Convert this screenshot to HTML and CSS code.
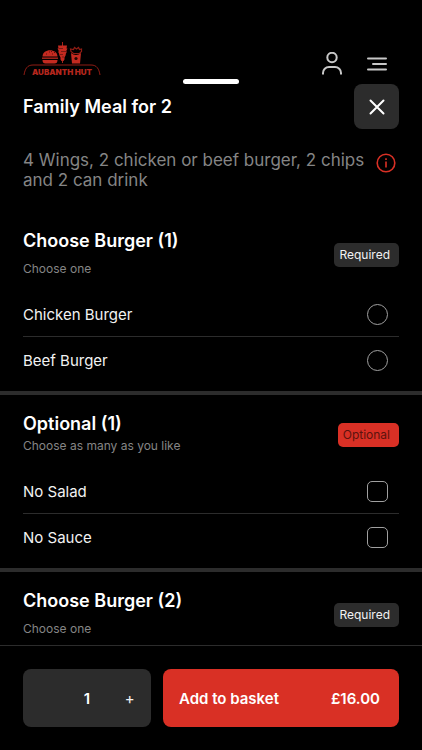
FILE: index.html
```html
<!DOCTYPE html>
<html lang="en">
<head>
  <meta charset="UTF-8" />
  <meta name="viewport" content="width=device-width, initial-scale=1" />
  <title>Family Meal for 2</title>
  <link rel="stylesheet" href="styles.css">
</head>
<body>
  <header class="topbar">
    <a href="#" class="logo" aria-label="Home">
      <svg viewBox="0 0 78 34" width="78" height="34" fill="none">
        <!-- burger -->
        <path d="M19.500 14.500c0-8.500 15-8.500 15 0z" fill="#c42a20"/>
        <path d="M23 12h1M26 10h1M29 12h1M31 10.500h1M28 9.500h1" stroke="#5c130e"/>
        <path d="M19 16.200h16" stroke="#a5231a" stroke-width="1.500"/>
        <path d="M19.500 18h15c0 2.500-1 3.500-3 3.500h-9c-2 0-3-1-3-3.500z" fill="#c42a20"/>
        <!-- kebab -->
        <path d="M39.500 0v21" stroke="#a5231a"/>
        <path d="M35 3.500h9l-.5 3h1l-1.500 3h1l-1.500 3h.5l-1.500 3v2l-1 1.500h-2l-1-1.500v-2l-1.500-3h.5l-1.500-3h1l-1.500-3h1z" fill="#c42a20"/>
        <path d="M36 6.500h4M38 9.500h5M37 12.500h3M39 15h2" stroke="#7a1a13"/>
        <!-- fries -->
        <path d="M48 9.500l-.5-2.500 3 .5 1-2 2 1.500 2-1.500 1 2 2-.5v2.500l-2 2h-6z" stroke="#8f1c14" stroke-width="1.200"/>
        <path d="M48 11c3 2.500 7 2.500 10 0l-1 10.500h-8z" fill="#c42a20"/>
        <circle cx="53" cy="16.500" r="1.600" fill="#240502"/>
        <path d="M1 33c1-6 3-10 9-10h58c6 0 8 4 9 10" stroke="#8f1c14"/>
      </svg>
      <span class="logo-name">AUBANTH HUT</span>
    </a>
    <nav class="topbar-nav">
      <button class="icon-btn" type="button" aria-label="Account">
        <svg viewBox="0 0 24 24" width="24" height="24" fill="none" stroke="currentColor" stroke-width="2">
          <circle cx="12" cy="5.500" r="4.700"/>
          <path d="M3 22.500v-1.500a6 6 0 0 1 6-6h6a6 6 0 0 1 6 6v1.500"/>
        </svg>
      </button>
      <button class="icon-btn" type="button" aria-label="Menu">
        <svg viewBox="0 0 24 24" width="24" height="24" fill="none" stroke="currentColor" stroke-width="2" stroke-linecap="round">
          <path d="M3 6.500h18M8 12h13M3 17.500h18"/>
        </svg>
      </button>
    </nav>
  </header>

  <main class="sheet">
    <div class="handle"></div>
    <div class="sheet-head">
      <h1>Family Meal for 2</h1>
      <button class="close" type="button" aria-label="Close">
        <svg viewBox="0 0 16 16" width="16" height="16" fill="none" stroke="currentColor" stroke-width="2" stroke-linecap="round">
          <path d="M1.500 1.500l13 13M14.500 1.500l-13 13"/>
        </svg>
      </button>
    </div>
    <div class="description">
      <p>4 Wings, 2 chicken or beef burger, 2 chips and 2 can drink</p>
      <button class="info" type="button" aria-label="Allergy information">
        <svg viewBox="0 0 20 20" width="20" height="20" fill="none" stroke="currentColor" stroke-width="1.600">
          <circle cx="10" cy="10" r="8.800"/>
          <path d="M10 8.500v6M10 5.200v1.800"/>
        </svg>
      </button>
    </div>

    <section class="group">
      <div class="group-head">
        <div class="group-title">
          <h2>Choose Burger (1)</h2>
          <p>Choose one</p>
        </div>
        <span class="badge">Required</span>
      </div>
      <label class="option"><span>Chicken Burger</span><input type="radio" name="burger1"></label>
      <label class="option"><span>Beef Burger</span><input type="radio" name="burger1"></label>
    </section>

    <section class="group">
      <div class="group-head">
        <div class="group-title tight">
          <h2>Optional (1)</h2>
          <p>Choose as many as you like</p>
        </div>
        <span class="badge badge-optional">Optional</span>
      </div>
      <label class="option"><span>No Salad</span><input type="checkbox" name="salad"></label>
      <label class="option"><span>No Sauce</span><input type="checkbox" name="sauce"></label>
    </section>

    <section class="group">
      <div class="group-head">
        <div class="group-title">
          <h2>Choose Burger (2)</h2>
          <p>Choose one</p>
        </div>
        <span class="badge">Required</span>
      </div>
    </section>
  </main>

  <footer class="basket">
    <div class="quantity">
      <output>1</output>
      <button type="button" aria-label="Increase quantity">+</button>
    </div>
    <button class="add" type="button">
      <span>Add to basket</span>
      <span>£16.00</span>
    </button>
  </footer>
</body>
</html>
```
FILE: styles.css
```css
:root {
  --font-sans: Inter, "Liberation Sans", sans-serif;
  --bg: #000;
  --panel: #2c2c2c;
  --line: #2c2c2c;
  --red: #d93025;
  --text: #f2f2f2;
  --muted: #858585;
  --gutter: 23px;
}
*, *::before, *::after { box-sizing: border-box; }

body {
  margin: 0;
  height: 100vh;
  display: flex;
  flex-direction: column;
  background: var(--bg);
  color: var(--text);
  font-family: var(--font-sans);
}
h1, h2, p { margin: 0; }
h1, h2 {
  color: #fff;
  font-size: 18px;
  font-weight: 600;
  line-height: 24px;
}
button {
  border: 0;
  padding: 0;
  background: none;
  color: inherit;
  font-family: inherit;
  cursor: pointer;
}
svg { display: block; }

.topbar {
  display: flex;
  align-items: flex-start;
  justify-content: space-between;
  padding: 42px var(--gutter) 3px;
}
.logo {
  position: relative;
  text-decoration: none;
}
.logo-name {
  position: absolute;
  left: 0;
  right: 0;
  top: 25px;
  color: #b3261d;
  font-size: 8px;
  font-weight: 900;
  line-height: 10px;
  text-align: center;
  white-space: nowrap;
}
.topbar-nav {
  display: flex;
  gap: 21px;
  padding: 10px 10px 0 0;
  color: #c8c8c8;
}
.icon-btn { height: 24px; }

.sheet {
  flex: 1;
  min-height: 0;
  overflow-y: auto;
  scrollbar-width: none;
}
.handle {
  width: 56px;
  height: 5px;
  margin: 0 auto;
  border-radius: 3px;
  background: #fff;
}
.sheet-head {
  display: flex;
  align-items: center;
  justify-content: space-between;
  padding: 0 var(--gutter);
}
.close {
  display: grid;
  place-items: center;
  width: 45px;
  height: 45px;
  border-radius: 8px;
  background: var(--panel);
  color: #fff;
}
.description {
  display: flex;
  justify-content: space-between;
  padding: 21px 26px 22px var(--gutter);
}
.description p {
  color: var(--muted);
  font-size: 17px;
  line-height: 20px;
}
.info {
  flex-shrink: 0;
  height: 20px;
  margin-top: 3px;
  color: var(--red);
}

.group { padding: 17px var(--gutter) 8px; }
.group + .group { border-top: 4px solid var(--line); }
.group-head {
  display: flex;
  align-items: center;
  justify-content: space-between;
  margin-bottom: 14px;
}
.group-title {
  display: flex;
  flex-direction: column;
  gap: 8px;
}
.group-title.tight { gap: 2px; }
.group-title p {
  color: var(--muted);
  font-size: 12px;
  line-height: 16px;
}
.badge {
  margin-top: 4px;
  padding: 0 9px 0 5px;
  border-radius: 5px;
  background: var(--panel);
  font-size: 12px;
  line-height: 24px;
}
.badge-optional {
  background: var(--red);
  color: #5c130e;
}
.option {
  display: flex;
  align-items: center;
  justify-content: space-between;
  height: 46px;
  padding-right: 11px;
  font-size: 15px;
  cursor: pointer;
}
.option + .option {
  box-shadow: 0 -1px 0 var(--line);
}
.option input {
  appearance: none;
  width: 21px;
  height: 21px;
  margin: 0;
  border: 1px solid #a0a0a0;
  border-radius: 5px;
}
.option input[type="radio"] { border-radius: 50%; }
.option input:checked { background: var(--red); }

.basket {
  display: flex;
  flex-shrink: 0;
  gap: 12px;
  padding: 23px var(--gutter);
  border-top: 1px solid var(--line);
}
.quantity {
  display: grid;
  grid-template-columns: 1fr 1fr 1fr;
  align-items: center;
  width: 128px;
  height: 58px;
  border-radius: 8px;
  background: var(--panel);
  text-align: center;
}
.quantity output {
  grid-column: 2;
  color: #fff;
  font-size: 15px;
  font-weight: 600;
}
.quantity button { font-size: 15px; }
.add {
  display: flex;
  flex: 1;
  align-items: center;
  justify-content: space-between;
  padding: 0 19px 0 16px;
  border-radius: 8px;
  background: var(--red);
  color: #fff;
  font-size: 15px;
  font-weight: 600;
}
```
